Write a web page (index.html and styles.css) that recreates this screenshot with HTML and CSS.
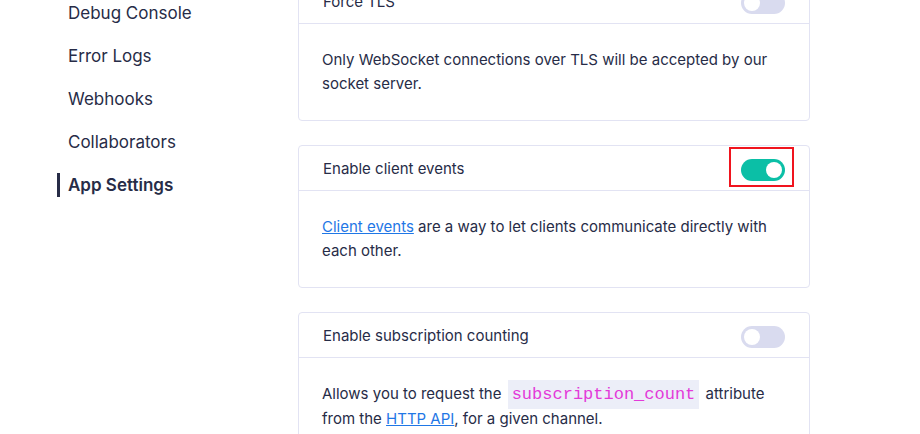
FILE: index.html
```html
<!DOCTYPE html>
<html lang="en">
  <head>
    <meta charset="UTF-8" />
    <meta name="viewport" content="width=device-width, initial-scale=1.0" />
    <title>App Settings</title>
    <link rel="stylesheet" href="styles.css">
  </head>

  <body>
    <div class="page">
      <nav class="sidebar">
        <a class="nav-item" href="#">Debug Console</a>
        <a class="nav-item" href="#">Error Logs</a>
        <a class="nav-item" href="#">Webhooks</a>
        <a class="nav-item" href="#">Collaborators</a>
        <a class="nav-item active" href="#">App Settings</a>
      </nav>

      <main class="settings">
        <section class="card">
          <div class="card-header">
            <span class="card-title">Force TLS</span>
            <span class="toggle"></span>
          </div>
          <div class="card-body">
            <p>Only WebSocket connections over TLS will be accepted by our socket server.</p>
          </div>
        </section>

        <section class="card">
          <div class="card-header">
            <span class="card-title">Enable client events</span>
            <span class="toggle on highlighted"></span>
          </div>
          <div class="card-body">
            <p><a href="#">Client events</a> are a way to let clients communicate directly with each other.</p>
          </div>
        </section>

        <section class="card">
          <div class="card-header">
            <span class="card-title">Enable subscription counting</span>
            <span class="toggle"></span>
          </div>
          <div class="card-body">
            <p>Allows you to request the <code>subscription_count</code> attribute from the <a href="#">HTTP API</a>, for a given channel.</p>
          </div>
        </section>
      </main>
    </div>
  </body>
</html>
```

FILE: styles.css
```css
* {
  box-sizing: border-box;
  margin: 0;
  padding: 0;
}

body {
  background: #ffffff;
  color: #272c47;
  font-family: Inter, "Noto Sans", sans-serif;
  overflow: hidden;
}

.page {
  display: flex;
  margin-top: -22px;
}

.sidebar {
  width: 298px;
  flex-shrink: 0;
  display: flex;
  flex-direction: column;
  gap: 19px;
  padding-top: 23px;
  padding-left: 57px;
}

.nav-item {
  display: block;
  font-size: 17px;
  line-height: 24px;
  color: #272c47;
  text-decoration: none;
  padding-left: 8px;
  border-left: 3px solid transparent;
}

.nav-item.active {
  font-weight: 600;
  border-left-color: #272c47;
}

.settings {
  width: 512px;
  display: flex;
  flex-direction: column;
  gap: 24px;
}

.card {
  border: 1px solid #e2e3f3;
  border-radius: 4px;
  background: #fff;
}

.card-header {
  height: 45px;
  display: flex;
  align-items: center;
  justify-content: space-between;
  padding: 0 24px;
  border-bottom: 1px solid #e2e3f3;
}

.card-title {
  font-size: 15px;
}

.card-body {
  padding: 24px 23px;
  font-size: 15px;
  line-height: 24px;
}

.card-body a {
  color: #1f77e6;
}

code {
  font-family: "Liberation Mono", "DejaVu Sans Mono", monospace;
  font-size: 17px;
  color: #e33ad9;
  background: #eceef8;
  padding: 5px 4px;
  margin: 0 2px;
}

.toggle {
  position: relative;
  display: block;
  width: 44px;
  height: 22px;
  margin-top: 3px;
  border-radius: 11px;
  background: #d9dbef;
}

.toggle::after {
  content: "";
  position: absolute;
  top: 3px;
  left: 3px;
  width: 16px;
  height: 16px;
  border-radius: 50%;
  background: #fff;
}

.toggle.on {
  background: #0bbfa6;
}

.toggle.on::after {
  left: 25px;
}

/* annotation frame drawn over the switch */
.toggle.highlighted::before {
  content: "";
  position: absolute;
  top: -12px;
  bottom: -6px;
  left: -12px;
  right: -9px;
  border: 2px solid #f0141e;
}
```
